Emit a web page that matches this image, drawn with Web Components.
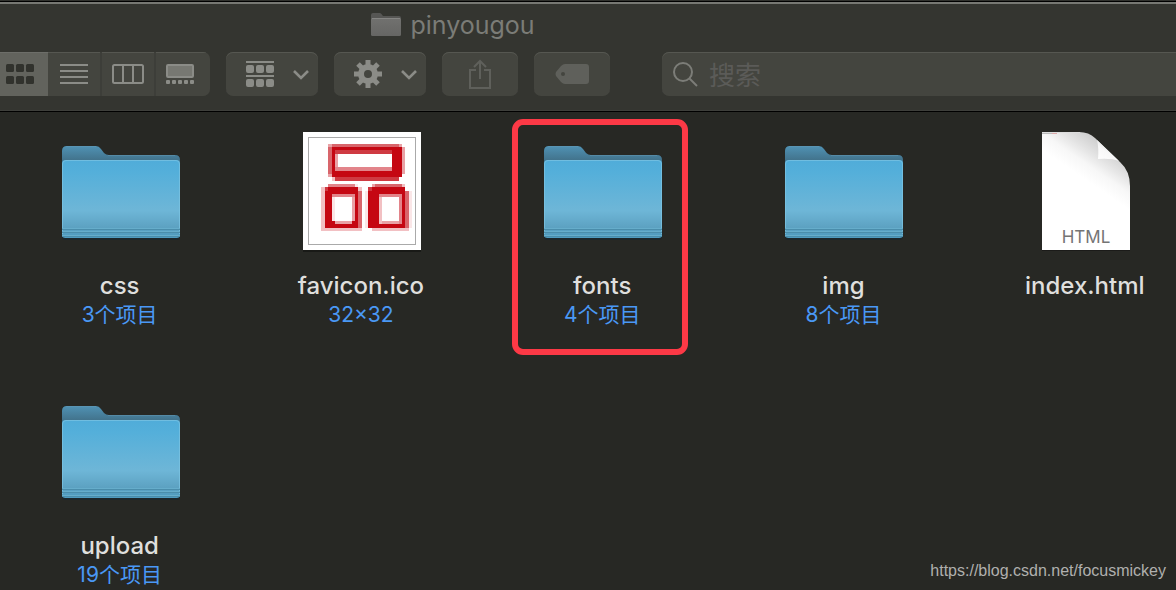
<!DOCTYPE html>
<html lang="zh-CN">
<head>
<meta charset="utf-8">
<meta name="viewport" content="width=device-width, initial-scale=1">
<title>pinyougou</title>
<style>
  body { margin: 0; background: #272824; font-family: Inter, "Noto Sans CJK SC", sans-serif; }
</style>
</head>
<body>
<finder-window>
  <finder-toolbar slot="toolbar" heading="pinyougou"></finder-toolbar>
  <file-item name="css" detail="3个项目"><folder-icon></folder-icon></file-item>
  <file-item name="favicon.ico" detail="32×32"><favicon-icon></favicon-icon></file-item>
  <file-item name="fonts" detail="4个项目" marked><folder-icon></folder-icon></file-item>
  <file-item name="img" detail="8个项目"><folder-icon></folder-icon></file-item>
  <file-item name="index.html"><html-icon></html-icon></file-item>
  <file-item name="upload" detail="19个项目"><folder-icon></folder-icon></file-item>
  <a slot="credit" href="https://blog.csdn.net/focusmickey">https://blog.csdn.net/focusmickey</a>
</finder-window>

<script>
const define = (name, html, setup) => customElements.define(name, class extends HTMLElement {
  constructor() {
    super();
    this.attachShadow({ mode: 'open' }).innerHTML = html;
  }
  connectedCallback() { if (setup) setup(this, this.shadowRoot); }
});

define('finder-window', `
  <style>
    :host { display: block; position: relative; height: 100vh; overflow: hidden; background: #272824; }
    .files { display: grid; grid-template-columns: repeat(5, 20.5%); grid-auto-rows: 260px; margin-left: -1px; }
    ::slotted(a) { position: absolute; right: 10px; bottom: 9px; font: 16px/20px "Liberation Sans", Arial, sans-serif; color: #b0b0ae; text-decoration: none; }
  </style>
  <slot name="toolbar"></slot>
  <main class="files"><slot></slot></main>
  <slot name="credit"></slot>`);

define('tool-button', `
  <style>
    :host { display: block; width: 76px; }
    :host([menu]) { width: 92px; }
    button { display: flex; align-items: center; justify-content: center; width: 100%; height: 44px; margin: 0; padding: 0;
      border: 0; border-radius: 7px; background: #44453f; box-shadow: inset 0 1px #565751; color: #8b8c87; }
    :host([menu]) button { padding-left: 12px; gap: 18px; }
    :host([dim]) button { color: #5f605b; }
    .chevron { display: none; }
    :host([menu]) .chevron { display: block; }
  </style>
  <button type="button"><slot></slot>
    <svg class="chevron" width="18" height="12" viewBox="0 0 18 12" fill="none" stroke="currentColor" stroke-width="2.6"><path d="M2 3l7 7 7-7"/></svg>
  </button>`, (host, root) => root.querySelector('button').setAttribute('aria-label', host.getAttribute('label')));

define('view-switch', `
  <style>
    :host { display: flex; width: 210px; height: 44px; border-radius: 0 7px 7px 0; overflow: hidden; background: #3c3d38; }
    button { flex: 1 1 52px; display: flex; align-items: center; justify-content: center; margin: 0; padding: 0; border: 0; box-sizing: border-box;
      background: #44453f; box-shadow: inset 0 1px #565751; color: #8b8c87; }
    button[aria-pressed=true] { flex: 0 0 48px; padding-right: 8px; background: #62635d; box-shadow: inset 0 1px #6d6e69; color: #31322d; }
    button:nth-of-type(n+3) { flex-basis: 54px; border-left: 2px solid #3d3e39; }
    button:last-child { flex-basis: 56px; padding-right: 6px; }
  </style>
  <button type="button" aria-label="图标" aria-pressed="true"><svg width="28" height="20" viewBox="0 0 28 20" fill="currentColor">
    <rect width="8" height="8" rx="1.500"/><rect x="10" width="8" height="8" rx="1.500"/><rect x="20" width="8" height="8" rx="1.500"/>
    <rect y="12" width="8" height="8" rx="1.500"/><rect x="10" y="12" width="8" height="8" rx="1.500"/><rect x="20" y="12" width="8" height="8" rx="1.500"/></svg></button>
  <button type="button" aria-label="列表"><svg width="28" height="20" viewBox="0 0 28 20" stroke="currentColor" stroke-width="2"><path d="M0 1h28M0 7h28M0 13h28M0 19h28"/></svg></button>
  <button type="button" aria-label="分栏"><svg width="32" height="20" viewBox="0 0 32 20" fill="none" stroke="currentColor" stroke-width="2"><rect x="1" y="1" width="30" height="18" rx="1.500"/><path d="M11 1v18M21 1v18"/></svg></button>
  <button type="button" aria-label="画廊"><svg width="28" height="20" viewBox="0 0 28 20" fill="currentColor"><rect x="1" y="1" width="26" height="12" rx="1" fill="#777872" stroke="currentColor" stroke-width="2"/>
    <rect y="16" width="4" height="4" rx="1"/><rect x="6" y="16" width="4" height="4" rx="1"/><rect x="12" y="16" width="4" height="4" rx="1"/><rect x="18" y="16" width="4" height="4" rx="1"/><rect x="24" y="16" width="4" height="4" rx="1"/></svg></button>`);

define('search-field', `
  <style>
    :host { display: block; }
    label { display: flex; align-items: center; gap: 10px; height: 44px; padding-left: 11px; border-radius: 7px 0 0 7px; background: #44453f; box-shadow: inset 0 1px #565751; color: #7c7d78; }
    svg { flex: none; }
    input { flex: 1; min-width: 0; height: 44px; padding: 2px 0 0; box-sizing: border-box; border: 0; outline: 0; background: none; color: #ddd; font: 26px/40px Inter, "Noto Sans CJK SC", sans-serif; }
    input::placeholder { color: #5b5b58; opacity: 1; }
  </style>
  <label><svg width="26" height="26" viewBox="0 0 26 26" fill="none" stroke="currentColor" stroke-width="2"><circle cx="10" cy="11" r="9"/><path d="M16.500 17.500l7.500 7.500"/></svg>
    <input type="search" placeholder="搜索" aria-label="搜索"></label>`);

define('finder-toolbar', `
  <style>
    :host { display: block; height: 112px; box-sizing: border-box; background: #343530; border-top: 1px solid #30312d; border-bottom: 1px solid #000;
      box-shadow: inset 0 1px #000, inset 0 3px #777873, inset 0 -1px #3e3f3b; }
    header { display: flex; justify-content: center; align-items: center; gap: 9px; height: 47px; padding-right: 270px; box-sizing: border-box; }
    h1 { margin: 0; font-size: 25px; line-height: 32px; font-weight: 400; color: #7b7c77; }
    nav { display: flex; gap: 16px; padding-top: 4px; }
    view-switch, tool-button { flex: none; }
    search-field { flex: 1; margin-left: 36px; }
  </style>
  <header><svg width="30" height="24" viewBox="0 0 30 24"><defs><linearGradient id="g" x2="0" y2="1"><stop stop-color="#71716f"/><stop offset="1" stop-color="#666664"/></linearGradient></defs>
    <path d="M0 8V2Q0 0 2 0h7q1 0 3 3h16q2 0 2 2v4z" fill="#565654"/><rect y="5" width="30" height="18" rx="1.500" fill="url(#g)"/><path d="M1 5.500h28" stroke="#858583"/></svg><h1></h1></header>
  <nav>
    <view-switch></view-switch>
    <tool-button menu label="分组"><svg width="28" height="26" viewBox="0 0 28 26" fill="currentColor"><rect width="28" height="2"/><rect y="14" width="28" height="2"/>
      <rect y="4" width="8" height="8" rx="2"/><rect x="10" y="4" width="8" height="8" rx="2"/><rect x="20" y="4" width="8" height="8" rx="2"/>
      <rect y="18" width="8" height="8" rx="2"/><rect x="10" y="18" width="8" height="8" rx="2"/><rect x="20" y="18" width="8" height="8" rx="2"/></svg></tool-button>
    <tool-button menu label="操作"><svg width="28" height="28" viewBox="-14 -14 28 28" fill="none" stroke="currentColor"><circle r="7" stroke-width="6"/>
      <path stroke-width="5" d="M0-14V-8M0 14V8M-14 0H-8M14 0H8M-10-10l4 4M10-10l-4 4M-10 10l4-4M10 10l-4-4"/></svg></tool-button>
    <tool-button dim label="共享"><svg width="22" height="30" viewBox="0 0 22 30" fill="none" stroke="currentColor" stroke-width="2"><path d="M7 11H1v18h20V11h-6M11 20V2M5 8l6-6 6 6"/></svg></tool-button>
    <tool-button dim label="标签"><svg width="34" height="20" viewBox="0 0 34 20"><path fill="currentColor" fill-rule="evenodd" d="M10 0h21q3 0 3 3v14q0 3-3 3H10Q8 20 6 18L1 12q-1-2 0-4L6 2Q8 0 10 0zM8 8a2 2 0 100 4 2 2 0 000-4z"/></svg></tool-button>
    <search-field></search-field>
  </nav>`, (host, root) => { root.querySelector('h1').textContent = host.getAttribute('heading'); });

define('file-item', `
  <style>
    :host { position: relative; display: block; padding-top: 20px; text-align: center; box-sizing: border-box; }
    figure { margin: 0; display: flex; flex-direction: column; align-items: center; }
    .icon { height: 118px; padding-left: 2px; margin-bottom: 21px; }
    .name { font-size: 24px; line-height: 30px; font-weight: 500; color: #dfdfdd; }
    .detail { font-size: 21px; line-height: 28px; color: #4a98f5; }
    :host([marked])::after { content: ""; position: absolute; top: 7px; left: 50%; width: 176px; height: 236px; margin-left: -90px; box-sizing: border-box; border: 6px solid #fc3946; border-radius: 11px; }
  </style>
  <figure><div class="icon"><slot></slot></div><figcaption><div class="name"></div><div class="detail"></div></figcaption></figure>`,
  (host, root) => {
    root.querySelector('.name').textContent = host.getAttribute('name');
    root.querySelector('.detail').textContent = host.getAttribute('detail') || '';
  });

const iconStyle = '<style>:host, svg { display: block; width: 120px; height: 118px; overflow: visible; }</style>';

define('folder-icon', iconStyle + `
  <svg viewBox="0 0 120 118">
    <defs>
      <linearGradient id="back" gradientUnits="userSpaceOnUse" x1="0" y1="14" x2="0" y2="30"><stop stop-color="#5092b4"/><stop offset="1" stop-color="#406f87"/></linearGradient>
      <linearGradient id="front" x2="0" y2="1"><stop stop-color="#50acd9"/><stop offset=".15" stop-color="#54afda"/><stop offset=".65" stop-color="#6eb6d7"/><stop offset=".86" stop-color="#5da2c2"/><stop offset="1" stop-color="#4d9abf"/></linearGradient>
    </defs>
    <rect x="1" y="30" width="118" height="78" rx="3" fill="#1c262a"/>
    <path d="M1 34V19q0-5 5-5h29q3 0 5 3l3 4q2 2 5 2h66q5 0 5 5v6z" fill="url(#back)"/>
    <path d="M5 14.500h30M47 23.500h67" stroke="#6398b3" stroke-opacity=".5"/>
    <rect x="1" y="28" width="118" height="78" rx="3.500" fill="url(#front)"/>
    <path d="M1.500 102V32q0-3.500 3.500-3.500h110q3.500 0 3.500 3.500v70" fill="none" stroke="#7ec4e3" stroke-opacity=".7"/>
    <path d="M1 97.500h118M1 100.500h118M1 104.500h118" stroke="#4a8dab"/>
    <path d="M1 96.500h118M1 99.500h118M1 103.500h118" stroke="#66adcb"/>
  </svg>`);

define('favicon-icon', iconStyle + `
  <svg viewBox="0 0 120 118">
    <rect x="1" y="1" width="118" height="119" fill="#000" opacity=".35"/>
    <rect x="1" width="118" height="118" fill="#fff"/>
    <rect x="6.500" y="5.500" width="107" height="107" fill="none" stroke="#aaa"/>
    <g transform="translate(6 5) scale(3.360)" shape-rendering="crispEdges">
      <path fill="#c50712" d="M7 3h21v9H7zM6 15h9v12H5V16h1zM19 15h10v12H18V16h1z"/>
      <path fill="#d8656b" d="M7 2h20v1H7zM6 3h1v8H6zM15 16h1v11h-1zM29 16h1v11h-1zM20 14h8v1h-8z"/>
      <path fill="#cf3a42" d="M8 4h17v1H8zM8 12h19v1H8zM5 15h1v1H5zM18 15h1v1h-1z"/>
      <path fill="#e2848a" d="M8 9h17v1H8zM6 14h8v1H6zM7 17h7v1H7zM21 17h7v1h-7zM27 18h1v8h-1z"/>
      <path fill="#e9a2a6" d="M6 2h1v1H6zM27 2h1v1h-1zM28 3h1v8h-1zM8 5h1v4H8zM13 18h1v7h-1zM8 25h5v1H8zM22 25h5v1h-5zM6 11h1v1H6zM19 14h1v1h-1z"/>
      <path fill="#f2c0c3" d="M4 15h1v12H4zM4 27h12v1H4zM19 27h11v1H19zM21 18h1v8h-1zM7 12h1v1H7zM28 14h1v1h-1zM15 15h1v1h-1z"/>
      <path fill="#fae6e7" d="M7 18h1v7H7zM14 14h1v1h-1zM17 16h1v11h-1zM30 16h1v11h-1z"/>
      <path fill="#fff" d="M9 5h16v4H9zM8 18h5v7H8zM22 18h5v7h-5z"/>
    </g>
  </svg>`);

define('html-icon', iconStyle + `
  <svg viewBox="0 0 120 118">
    <defs>
      <linearGradient id="shade" gradientUnits="userSpaceOnUse" x1="82" y1="16" x2="60" y2="48"><stop stop-color="#d0d0d0"/><stop offset=".35" stop-color="#e4e4e4"/><stop offset=".65" stop-color="#f7f7f7"/><stop offset="1" stop-color="#fff"/></linearGradient>
      <linearGradient id="curl" x1="0" y1="1" x2=".6" y2=".2"><stop stop-color="#fff"/><stop offset=".6" stop-color="#f8f8f8"/><stop offset="1" stop-color="#ddd"/></linearGradient>
    </defs>
    <path d="M16 2h38l50 50v67H16z" fill="#000" opacity=".3"/>
    <path d="M16 0h37q10 0 16 6l25 24q10 9 10 24v64H16z" fill="url(#shade)"/>
    <path d="M16 .500h38" stroke="#ddd"/><path d="M16 1.500h14" stroke="#bbb"/><path d="M26 1.500h5" stroke="#daa"/>
    <path d="M71 8q2 8 1 19 13-1 21 2z" fill="url(#curl)"/>
    <text x="60" y="111" text-anchor="middle" font-family="Inter, sans-serif" font-size="17" fill="#747474">HTML</text>
  </svg>`);
</script>
</body>
</html>
